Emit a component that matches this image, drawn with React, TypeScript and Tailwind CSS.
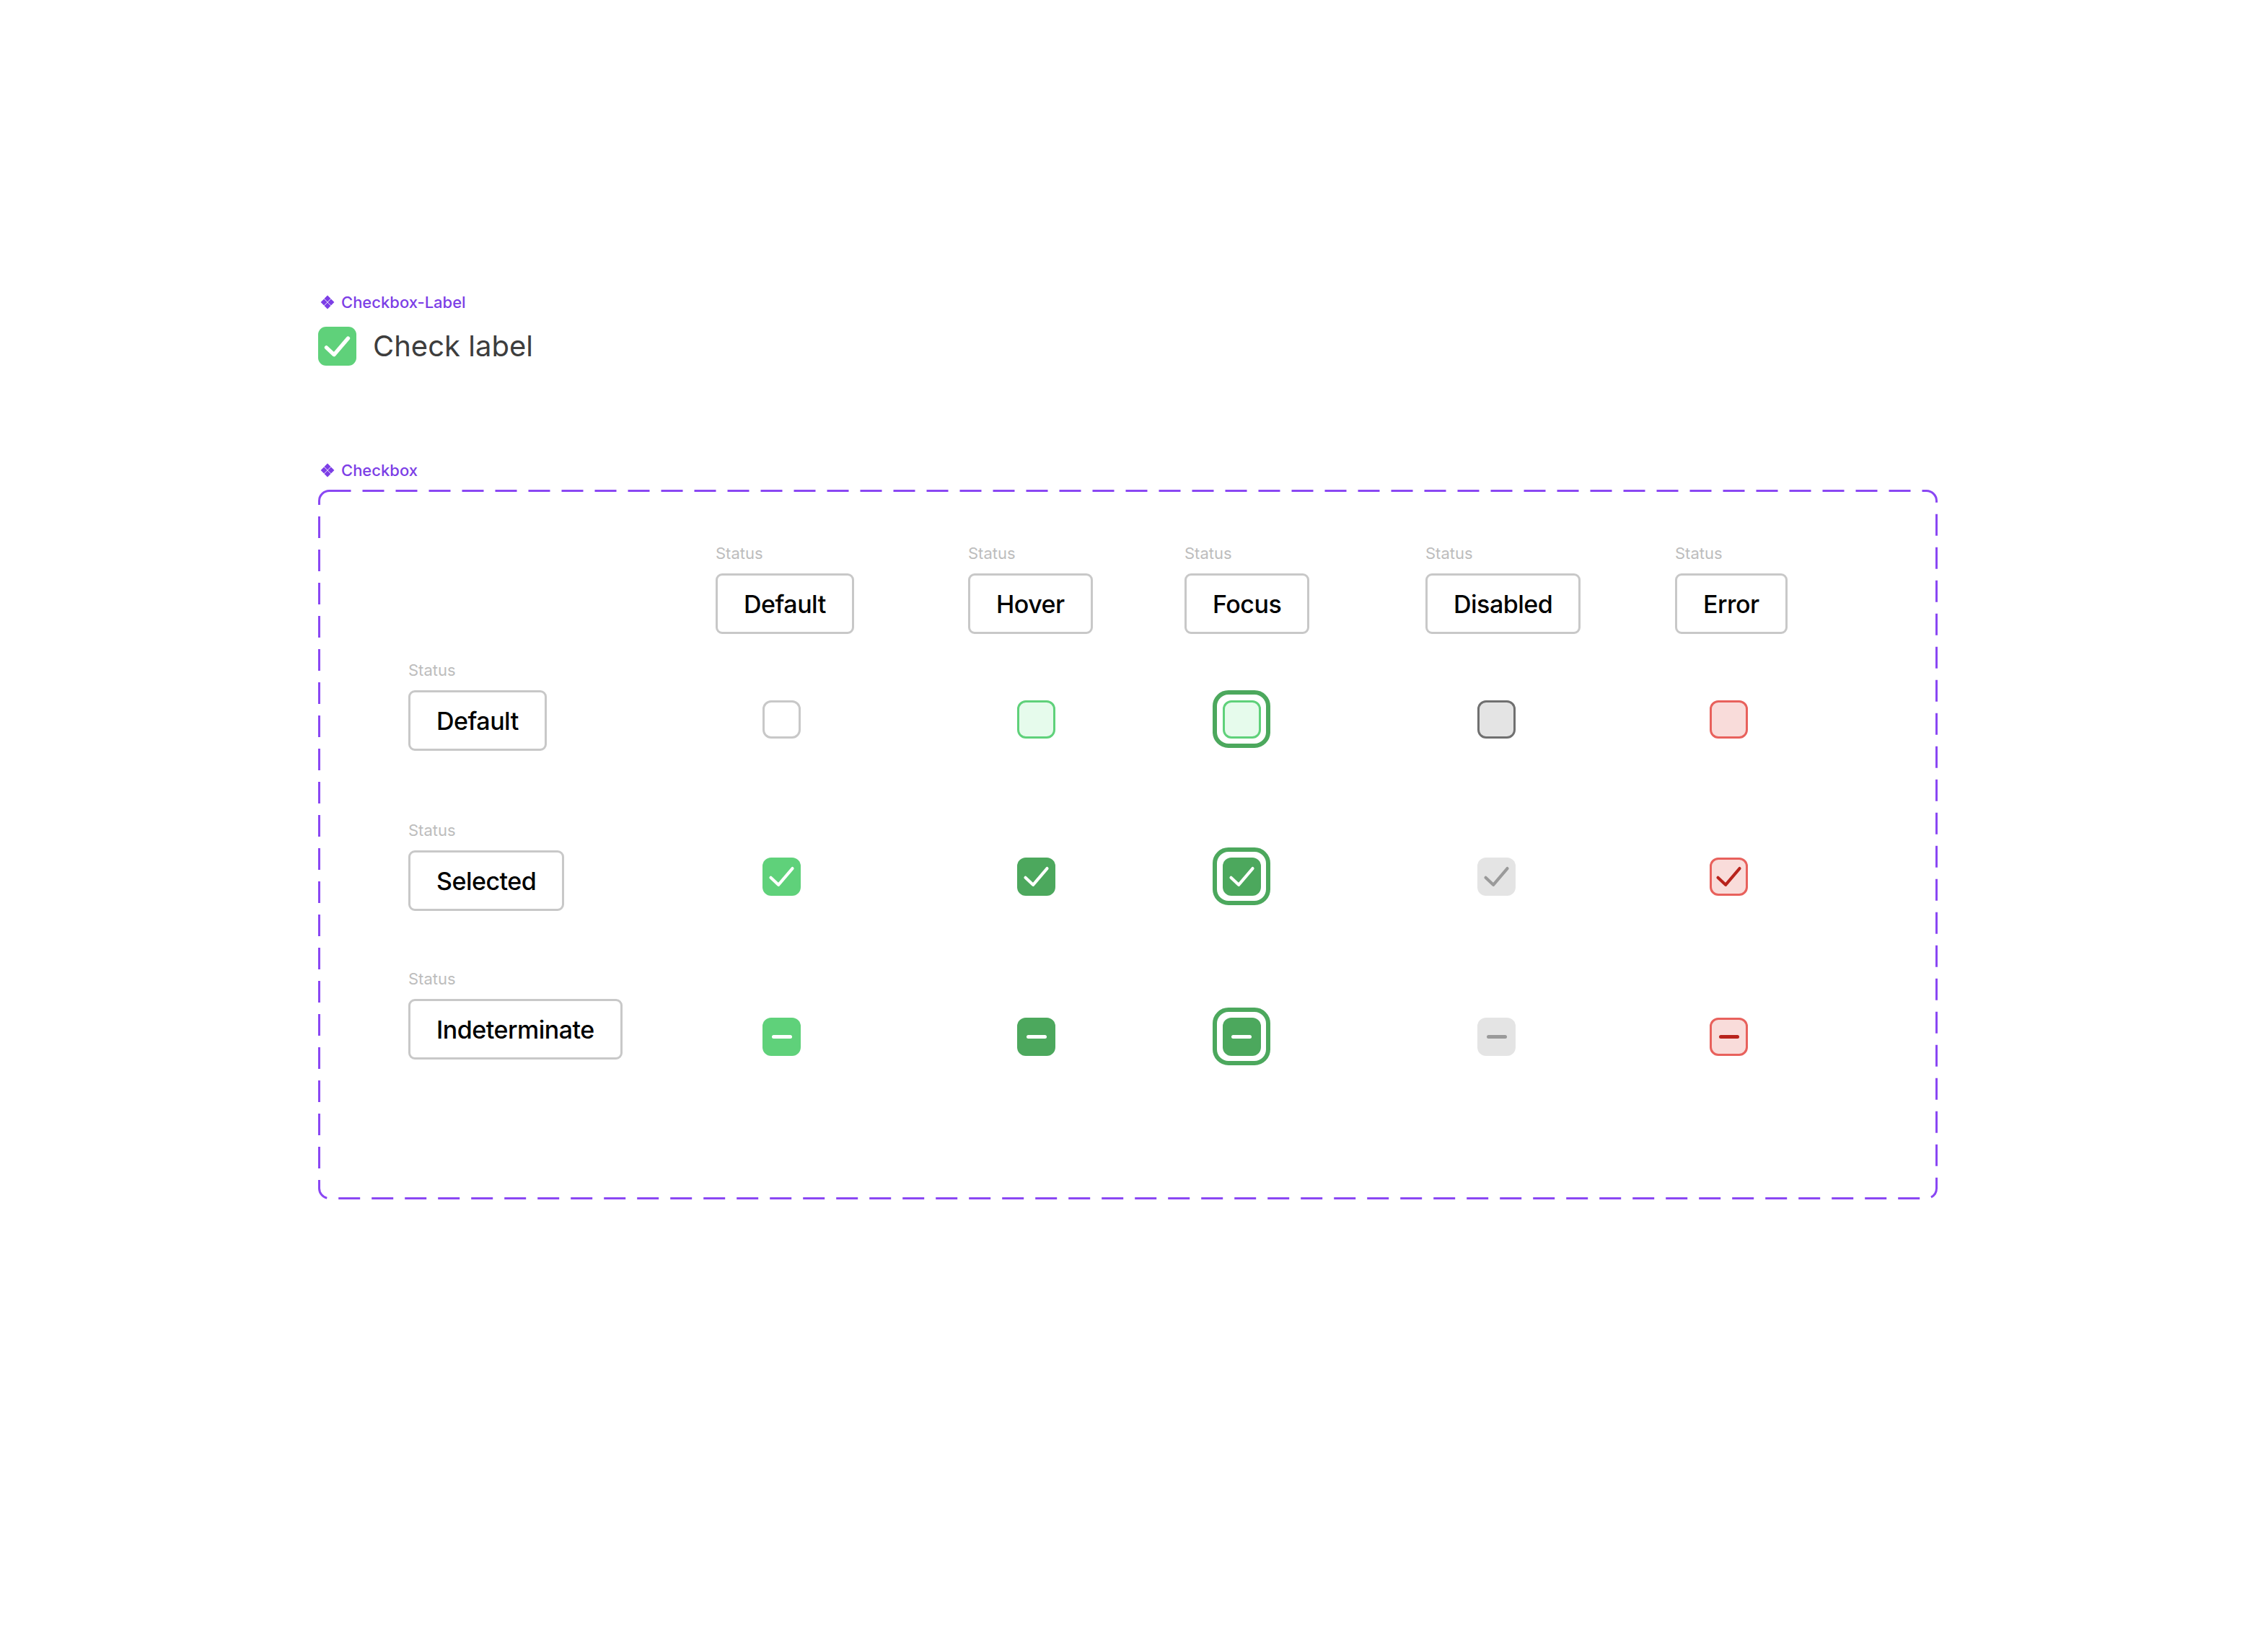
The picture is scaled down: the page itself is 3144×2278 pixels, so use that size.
import React from "react";

type Kind = "unchecked" | "checked" | "indet";
type State = "default" | "hover" | "focus" | "disabled" | "error";

const ComponentIcon = ({ size = 20 }: { size?: number }) => (
  <svg width={size} height={size} viewBox="0 0 20 20" fill="#7c3ee6">
    <polygon points="10,0.6 14.5,5.1 10,9.6 5.5,5.1" />
    <polygon points="5.1,5.5 9.6,10 5.1,14.5 0.6,10" />
    <polygon points="14.9,5.5 19.4,10 14.9,14.5 10.4,10" />
    <polygon points="10,10.4 14.5,14.9 10,19.4 5.5,14.9" />
  </svg>
);

const CheckMark = ({ color, stroke = 1.9 }: { color: string; stroke?: number }) => (
  <svg width="53" height="53" viewBox="0 0 24 24" fill="none" stroke={color} strokeWidth={stroke} strokeLinecap="round" strokeLinejoin="round">
    <path d="M18.8 6.8 10 17.1 5.2 12.6" />
  </svg>
);

const boxStyle: Record<Kind, Record<State, string>> = {
  unchecked: {
    default: "border-[3px] border-[#c8c8c8] bg-white",
    hover: "border-[3px] border-[#5fd17a] bg-[#e6fbec]",
    focus: "border-[3px] border-[#5fd17a] bg-[#e6fbec]",
    disabled: "border-[3px] border-[#707070] bg-[#e4e4e4]",
    error: "border-[3px] border-[#e8615c] bg-[#f9dcda]",
  },
  checked: {
    default: "bg-[#5fd17a]",
    hover: "bg-[#4ca85d]",
    focus: "bg-[#4ca85d]",
    disabled: "bg-[#e4e4e4]",
    error: "border-[3px] border-[#e8615c] bg-[#f9dcda]",
  },
  indet: {
    default: "bg-[#5fd17a]",
    hover: "bg-[#4ca85d]",
    focus: "bg-[#4ca85d]",
    disabled: "bg-[#e4e4e4]",
    error: "border-[3px] border-[#e8615c] bg-[#f9dcda]",
  },
};

const markColor: Record<State, string> = {
  default: "#ffffff",
  hover: "#ffffff",
  focus: "#ffffff",
  disabled: "#9a9a9a",
  error: "#b8231c",
};

const dashColor: Record<State, string> = {
  default: "bg-white",
  hover: "bg-white",
  focus: "bg-white",
  disabled: "bg-[#9a9a9a]",
  error: "bg-[#b8231c]",
};

const Checkbox = ({ kind, state }: { kind: Kind; state: State }) => {
  const box = (
    <div className={`w-[53px] h-[53px] rounded-[12px] flex items-center justify-center overflow-hidden ${boxStyle[kind][state]}`}>
      {kind === "checked" && (
        <div className="shrink-0">
          <CheckMark color={markColor[state]} />
        </div>
      )}
      {kind === "indet" && <div className={`w-[28px] h-[5px] rounded-full ${dashColor[state]}`} />}
    </div>
  );

  if (state === "focus") {
    return (
      <div className="w-[80px] h-[80px] rounded-[22px] border-[6px] border-[#4ca85d] flex items-center justify-center">
        {box}
      </div>
    );
  }
  return box;
};

const StatusTag = ({ label }: { label: string }) => (
  <div className="flex flex-col items-start">
    <div className="h-[26px] leading-[26px] text-[22px] text-[#bdbdbd]">Status</div>
    <div className="mt-[15px] h-[84px] px-[36px] flex items-center border-[3px] border-[#c8c8c8] rounded-[9px] text-[34px] font-medium text-black whitespace-nowrap tracking-[-0.5px]">
      {label}
    </div>
  </div>
);

const columns: { state: State; label: string; cb: string; w: string }[] = [
  { state: "default", label: "Default", cb: "pl-[65px]", w: "w-[350px]" },
  { state: "hover", label: "Hover", cb: "pl-[68px]", w: "w-[300px]" },
  { state: "focus", label: "Focus", cb: "pl-[39px]", w: "w-[334px]" },
  { state: "disabled", label: "Disabled", cb: "pl-[72px]", w: "w-[346px]" },
  { state: "error", label: "Error", cb: "pl-[48px]", w: "w-[300px]" },
];

const rows: { kind: Kind; label: string; mt: string; cbOffset: string }[] = [
  { kind: "unchecked", label: "Default", mt: "mt-[37px]", cbOffset: "pt-[39px]" },
  { kind: "checked", label: "Selected", mt: "mt-[97px]", cbOffset: "pt-[35px]" },
  { kind: "indet", label: "Indeterminate", mt: "mt-[81px]", cbOffset: "pt-[51px]" },
];

const App = () => {
  return (
    <div
      className="w-[3144px] h-[2278px] bg-white pl-[441px] pt-[406px]"
      style={{ fontFamily: "Inter, 'Noto Sans', sans-serif" }}
    >
      <div className="flex items-center gap-[9px] h-[26px] pl-[3px] text-[22px] font-medium text-[#7c3ee6]">
        <ComponentIcon />
        <span>Checkbox-Label</span>
      </div>

      <div className="mt-[21px] flex items-center gap-[23px]">
        <div className="w-[53px] h-[54px] rounded-[11px] bg-[#5fd17a] flex items-center justify-center">
          <CheckMark color="#ffffff" stroke={2.4} />
        </div>
        <span className="text-[40px] text-[#3d3d3d] leading-none">Check label</span>
      </div>

      <div className="mt-[132px] flex items-center gap-[9px] h-[26px] pl-[3px] text-[22px] font-medium text-[#7c3ee6]">
        <ComponentIcon />
        <span>Checkbox</span>
      </div>

      <div className="relative mt-[14px] w-[2245px] h-[984px] pl-[125px] pt-[75px]">
        <svg className="absolute left-0 top-0" width="2245" height="984">
          <rect
            x="1.5"
            y="1.5"
            width="2242"
            height="981"
            rx="14"
            fill="none"
            stroke="#8a47f3"
            strokeWidth="3"
            strokeDasharray="30 16"
          />
        </svg>

        <div className="flex">
          <div className="w-[426px]" />
          {columns.map((c) => (
            <div key={c.label} className={c.w}>
              <StatusTag label={c.label} />
            </div>
          ))}
        </div>

        {rows.map((r) => (
          <div key={r.label} className={`flex ${r.mt}`}>
            <div className="w-[426px]">
              <StatusTag label={r.label} />
            </div>
            {columns.map((c) => (
              <div key={c.label} className={`${c.w} ${r.cbOffset}`}>
                <div className={`h-[84px] flex items-center ${c.cb}`}>
                  <Checkbox kind={r.kind} state={c.state} />
                </div>
              </div>
            ))}
          </div>
        ))}
      </div>
    </div>
  );
};

export default App;
